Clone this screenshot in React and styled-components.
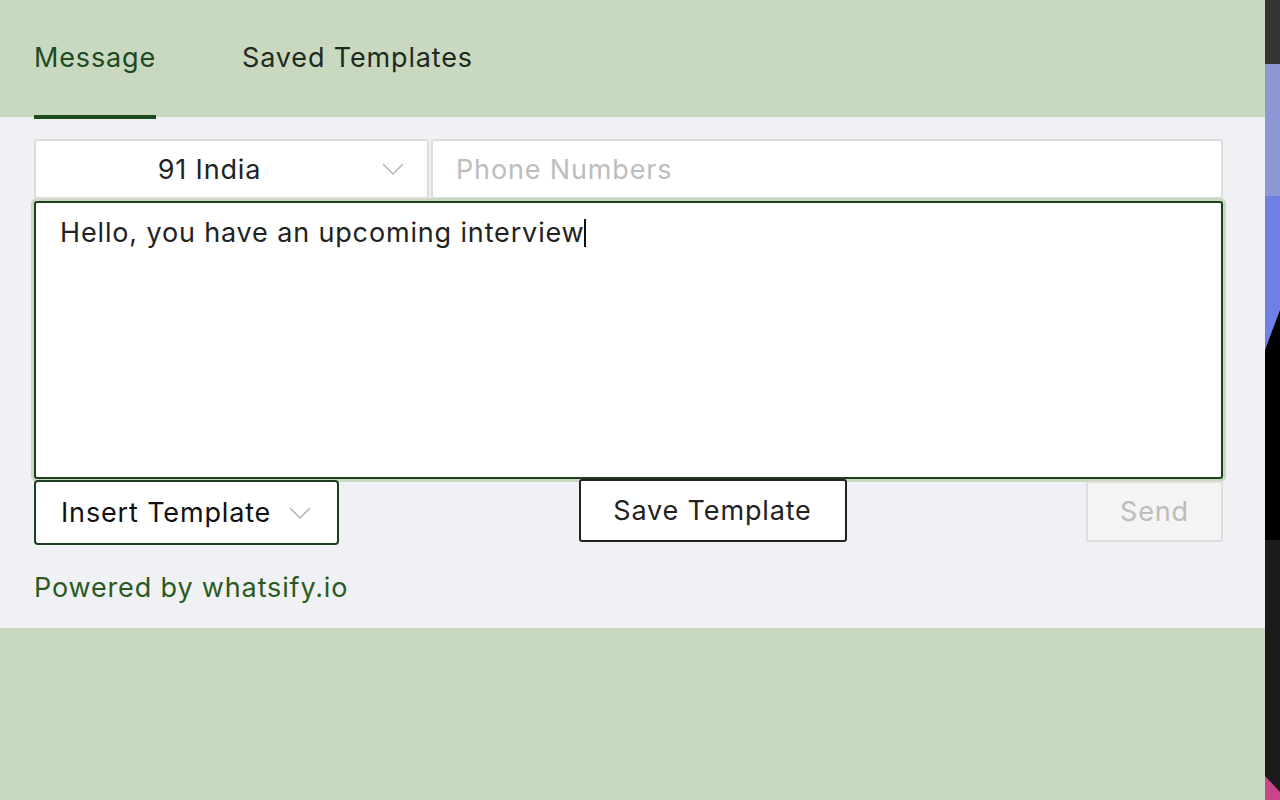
import styled, { createGlobalStyle } from 'styled-components';

const GlobalStyle = createGlobalStyle`
  html, body {
    margin: 0;
    padding: 0;
    height: 100%;
  }
  body {
    font-family: Inter, 'Noto Sans', 'Liberation Sans', sans-serif;
    letter-spacing: 0.85px;
    background-color: #c9d9c0;
  }
  #root {
    height: 100%;
  }
`;

const Screen = styled.div`
  display: flex;
  height: 800px;
  width: 1280px;
  overflow: hidden;
`;

const Popup = styled.div`
  width: 1265px;
  display: flex;
  flex-direction: column;
  background-color: #c9d9c0;
`;

const Desktop = styled.svg`
  width: 15px;
  height: 800px;
  flex-shrink: 0;
  display: block;
`;

const TabBar = styled.div`
  height: 117px;
  display: flex;
  align-items: stretch;
  padding-left: 34px;
  gap: 86px;
  box-sizing: border-box;
  position: relative;
  z-index: 1;
`;

const Tab = styled.div`
  display: flex;
  align-items: center;
  padding-top: 0;
  font-size: 27px;
  color: ${(props) => (props.active ? '#1d4a1f' : '#1f2a1f')};
  border-bottom: 4px solid ${(props) => (props.active ? '#1b4a1b' : 'transparent')};
  margin-bottom: -2px;
  box-sizing: border-box;
  cursor: pointer;
`;

const Body = styled.div`
  background-color: #f0f1f4;
  padding: 22px 42px 24px 34px;
  display: flex;
  flex-direction: column;
`;

const NumberRow = styled.div`
  display: flex;
  gap: 2px;
  height: 60px;
`;

const CountrySelect = styled.div`
  width: 395px;
  position: relative;
  display: flex;
  align-items: center;
  justify-content: center;
  padding-right: 44px;
  background: #fff;
  border: 2px solid #dcdcdc;
  border-radius: 3px;
  box-sizing: border-box;
  font-size: 27px;
  color: #222;
`;

const Chevron = styled.svg`
  position: absolute;
  right: ${(props) => props.right}px;
  top: 50%;
  transform: translateY(-50%);
`;

const PhoneInput = styled.div`
  flex: 1;
  display: flex;
  align-items: center;
  padding-left: 23px;
  background: #fff;
  border: 2px solid #dcdcdc;
  border-radius: 3px;
  box-sizing: border-box;
  font-size: 27px;
  color: #bdbdbd;
`;

const MessageBox = styled.div`
  margin-top: 2px;
  height: 278px;
  background: #fff;
  border: 2px solid #1f3d1f;
  border-radius: 3px;
  box-shadow: 0 0 0 3px #c9d9c0;
  box-sizing: border-box;
  padding: 12px 24px;
  font-size: 27px;
  line-height: 36px;
  color: #222;
`;

const Caret = styled.span`
  display: inline-block;
  width: 1.5px;
  height: 28px;
  margin-left: -0.5px;
  background: #111;
  vertical-align: -5px;
`;

const ActionRow = styled.div`
  display: flex;
  justify-content: space-between;
  align-items: flex-start;
  margin-top: 1px;
`;

const TemplateSelect = styled.div`
  width: 305px;
  height: 65px;
  position: relative;
  display: flex;
  align-items: center;
  padding-left: 25px;
  background: #fff;
  border: 2px solid #1f3d1f;
  border-radius: 4px;
  box-sizing: border-box;
  font-size: 27px;
  color: #111;
`;

const Button = styled.button`
  font-family: inherit;
  letter-spacing: inherit;
  font-size: 27px;
  height: ${(props) => (props.disabled ? 61 : 63)}px;
  width: ${(props) => (props.disabled ? 137 : 268)}px;
  margin-top: ${(props) => (props.disabled ? 1 : -1)}px;
  border-radius: 3px;
  box-sizing: border-box;
  background: ${(props) => (props.disabled ? '#f4f4f5' : '#fff')};
  border: 2px solid ${(props) => (props.disabled ? '#dedede' : '#222')};
  color: ${(props) => (props.disabled ? '#bcbcbc' : '#222')};
  cursor: ${(props) => (props.disabled ? 'default' : 'pointer')};
  padding: 0;
`;

const Footer = styled.div`
  margin-top: 26px;
  font-size: 27px;
  color: #2a5a22;
`;

function ChevronIcon({ right }) {
  return (
    <Chevron right={right} width="22" height="13" viewBox="0 0 22 13">
      <path d="M1 1.5 L11 11.5 L21 1.5" fill="none" stroke="#b5b5b5" strokeWidth="1.5" />
    </Chevron>
  );
}

export default function App() {
  return (
    <>
      <GlobalStyle />
      <Screen>
        <Popup>
          <TabBar>
            <Tab active>Message</Tab>
            <Tab>Saved Templates</Tab>
          </TabBar>
          <Body>
            <NumberRow>
              <CountrySelect>
                91 India
                <ChevronIcon right={23} />
              </CountrySelect>
              <PhoneInput>Phone Numbers</PhoneInput>
            </NumberRow>
            <MessageBox>
              Hello, you have an upcoming interview
              <Caret />
            </MessageBox>
            <ActionRow>
              <TemplateSelect>
                Insert Template
                <ChevronIcon right={26} />
              </TemplateSelect>
              <Button>Save Template</Button>
              <Button disabled>Send</Button>
            </ActionRow>
            <Footer>Powered by whatsify.io</Footer>
          </Body>
        </Popup>
        <Desktop viewBox="0 0 15 800" preserveAspectRatio="none">
          <rect x="0" y="0" width="15" height="800" fill="#1b1b1b" />
          <rect x="0" y="0" width="15" height="64" fill="#343434" />
          <rect x="0" y="64" width="15" height="132" fill="#8d97d3" />
          <rect x="0" y="196" width="15" height="160" fill="#6e80e4" />
          <polygon points="15,310 15,540 0,540 0,350" fill="#000" />
          <polygon points="0,776 15,792 15,800 0,800" fill="#c8458a" />
        </Desktop>
      </Screen>
    </>
  );
}
